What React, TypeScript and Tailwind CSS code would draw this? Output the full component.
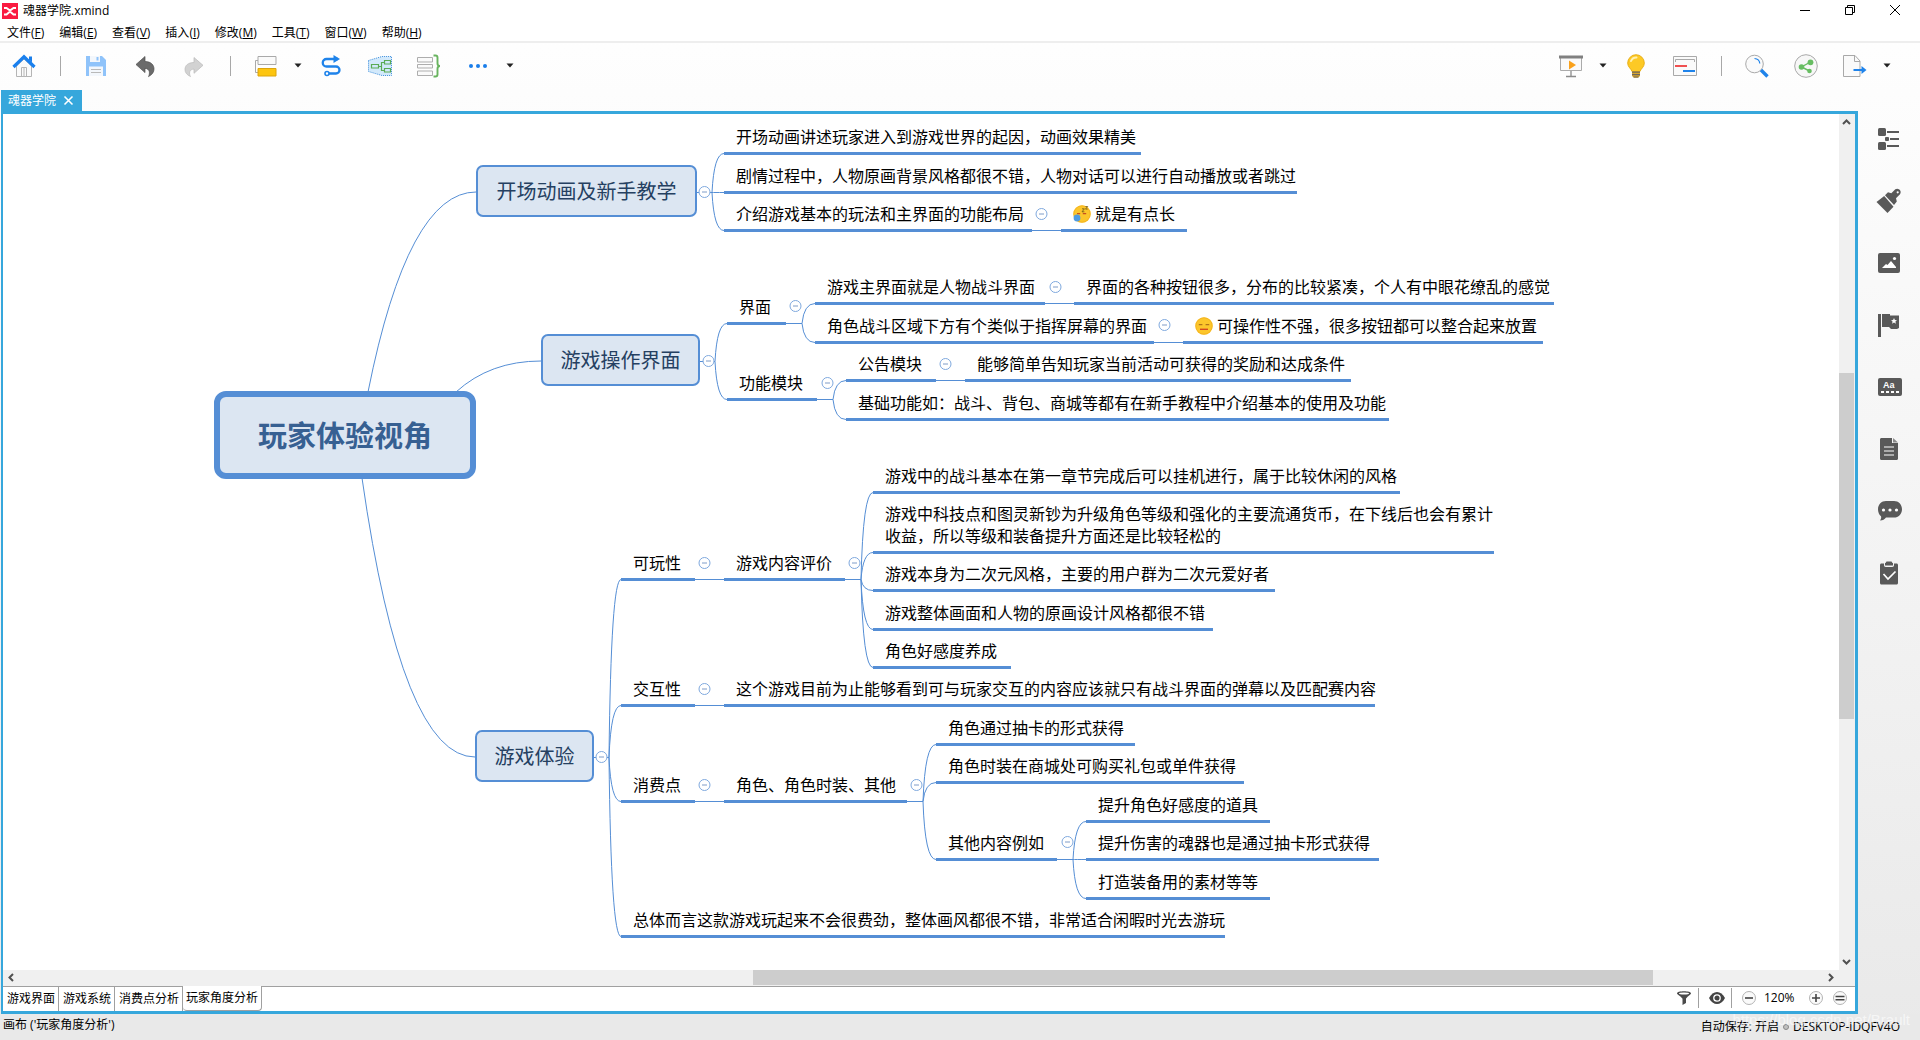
import React from 'react';

type Kind = 'root' | 'main' | 'leaf';

interface Topic {
  kind?: Kind;
  x: number;
  y: number;
  w: number;
  h?: number;
  text: string;
  emoji?: 'sleepy' | 'blank';
}

const MENUS = [
  { label: '文件', key: 'F' },
  { label: '编辑', key: 'E' },
  { label: '查看', key: 'V' },
  { label: '插入', key: 'I' },
  { label: '修改', key: 'M' },
  { label: '工具', key: 'T' },
  { label: '窗口', key: 'W' },
  { label: '帮助', key: 'H' },
];

const SHEETS = ['游戏界面', '游戏系统', '消费点分析', '玩家角度分析'];

// boxed topics: x / y is the top left corner
const BOXES: Topic[] = [
  { kind: 'root', x: 211, y: 277, w: 262, h: 88, text: '玩家体验视角' },
  { kind: 'main', x: 473, y: 51, w: 221, h: 52, text: '开场动画及新手教学' },
  { kind: 'main', x: 538, y: 220, w: 159, h: 52, text: '游戏操作界面' },
  { kind: 'main', x: 472, y: 616, w: 119, h: 52, text: '游戏体验' },
];

// underlined topics: y is the centre of the underline
const LEAVES: Topic[] = [
  { x: 721, y: 39, w: 417, text: '开场动画讲述玩家进入到游戏世界的起因，动画效果精美' },
  { x: 721, y: 78, w: 573, text: '剧情过程中，人物原画背景风格都很不错，人物对话可以进行自动播放或者跳过' },
  { x: 721, y: 116, w: 308, text: '介绍游戏基本的玩法和主界面的功能布局' },
  { x: 1058, y: 116, w: 126, text: '就是有点长', emoji: 'sleepy' },

  { x: 724, y: 209, w: 59, text: '界面' },
  { x: 812, y: 189, w: 230, text: '游戏主界面就是人物战斗界面' },
  { x: 1071, y: 189, w: 480, text: '界面的各种按钮很多，分布的比较紧凑，个人有中眼花缭乱的感觉' },
  { x: 812, y: 228, w: 339, text: '角色战斗区域下方有个类似于指挥屏幕的界面' },
  { x: 1180, y: 228, w: 360, text: '可操作性不强，很多按钮都可以整合起来放置', emoji: 'blank' },
  { x: 724, y: 285, w: 90, text: '功能模块' },
  { x: 843, y: 266, w: 90, text: '公告模块' },
  { x: 962, y: 266, w: 386, text: '能够简单告知玩家当前活动可获得的奖励和达成条件' },
  { x: 843, y: 305, w: 543, text: '基础功能如：战斗、背包、商城等都有在新手教程中介绍基本的使用及功能' },

  { x: 618, y: 465, w: 74, text: '可玩性' },
  { x: 721, y: 465, w: 121, text: '游戏内容评价' },
  { x: 870, y: 378, w: 527, text: '游戏中的战斗基本在第一章节完成后可以挂机进行，属于比较休闲的风格' },
  { x: 870, y: 438, w: 621, text: '游戏中科技点和图灵新钞为升级角色等级和强化的主要流通货币，在下线后也会有累计\n收益，所以等级和装备提升方面还是比较轻松的' },
  { x: 870, y: 476, w: 402, text: '游戏本身为二次元风格，主要的用户群为二次元爱好者' },
  { x: 870, y: 515, w: 340, text: '游戏整体画面和人物的原画设计风格都很不错' },
  { x: 870, y: 553, w: 138, text: '角色好感度养成' },

  { x: 618, y: 591, w: 74, text: '交互性' },
  { x: 721, y: 591, w: 651, text: '这个游戏目前为止能够看到可与玩家交互的内容应该就只有战斗界面的弹幕以及匹配赛内容' },

  { x: 618, y: 687, w: 74, text: '消费点' },
  { x: 721, y: 687, w: 183, text: '角色、角色时装、其他' },
  { x: 933, y: 630, w: 199, text: '角色通过抽卡的形式获得' },
  { x: 933, y: 668, w: 308, text: '角色时装在商城处可购买礼包或单件获得' },
  { x: 933, y: 745, w: 121, text: '其他内容例如' },
  { x: 1083, y: 707, w: 184, text: '提升角色好感度的道具' },
  { x: 1083, y: 745, w: 293, text: '提升伤害的魂器也是通过抽卡形式获得' },
  { x: 1083, y: 784, w: 184, text: '打造装备用的素材等等' },

  { x: 618, y: 822, w: 604, text: '总体而言这款游戏玩起来不会很费劲，整体画风都很不错，非常适合闲暇时光去游玩' },
];

// start of the stem, joint, x where the children begin, their underline heights
const BRACKETS = [
  { from: 694, joint: 709, y: 78, to: 721, ends: [39, 78, 116] },
  { from: 697, joint: 712, y: 247, to: 724, ends: [209, 285] },
  { from: 591, joint: 606, y: 643, to: 618, ends: [465, 591, 687, 822] },
  { from: 783, joint: 799, y: 209, to: 812, ends: [189, 228] },
  { from: 814, joint: 830, y: 285, to: 843, ends: [266, 305] },
  { from: 842, joint: 858, y: 465, to: 870, ends: [378, 438, 476, 515, 553] },
  { from: 904, joint: 920, y: 687, to: 933, ends: [630, 668, 745] },
  { from: 1054, joint: 1070, y: 745, to: 1083, ends: [707, 745, 784] },
];

const STEMS = [
  [1029, 1058, 116],
  [1042, 1071, 189],
  [1151, 1180, 228],
  [933, 962, 266],
  [692, 721, 465],
  [692, 721, 591],
  [692, 721, 687],
];

const TOGGLES = [
  [701, 78], [705, 247], [598, 643], [1038, 100], [792, 192], [1052, 173], [1161, 211],
  [824, 269], [942, 250], [701, 449], [851, 449], [701, 575], [701, 671], [913, 671], [1064, 728],
];

function Emoji({ type }: { type: 'sleepy' | 'blank' }) {
  return (
    <svg viewBox="0 0 18 18" className="mr-1 h-[18px] w-[18px] shrink-0">
      <circle cx="9" cy="9" r="8.7" fill="#fcc62b" />
      <circle cx="9" cy="9" r="8.2" fill="none" stroke="#f2b01e" strokeWidth="0.8" />
      {type === 'blank' ? (
        <>
          <path d="M3.8 7.6h3.6M10.6 7.6h3.6" stroke="#b0731a" strokeWidth="1.4" />
          <path d="M5 12.3h8" stroke="#d4491f" strokeWidth="1.4" />
        </>
      ) : (
        <>
          <path d="M4 8.6h3.2M9.8 8.6h3.4" stroke="#c8501e" strokeWidth="1.3" />
          <circle cx="4" cy="13" r="3.4" fill="#4e9be0" />
          <path d="M9 3.800h2.400l-2.400 3h2.400M12.500 1.500h2.200l-2.200 2.600h2.200" fill="none" stroke="#6b5417" strokeWidth="0.8" />
        </>
      )}
    </svg>
  );
}

function BoxTopic({ topic }: { topic: Topic }) {
  const root = topic.kind === 'root';
  return (
    <div
      className={
        root
          ? 'absolute flex items-center justify-center rounded-xl border-[6px] border-[#558ed5] bg-[#dce6f2] pt-0.5 text-[29px] font-bold text-[#376092]'
          : 'absolute flex items-center justify-center rounded-[7px] border-2 border-[#558ed5] bg-[#dce6f2] pt-0.5 text-xl text-[#254061]'
      }
      style={{ left: topic.x, top: topic.y, width: topic.w, height: topic.h }}
    >
      <span className="whitespace-nowrap">{topic.text}</span>
    </div>
  );
}

function LeafTopic({ topic }: { topic: Topic }) {
  const lines = topic.text.split('\n').length;
  return (
    <div
      className="absolute flex items-center border-b-[3px] border-[#558ed5] pb-1 pl-3 text-base leading-[22px] text-black"
      style={{ left: topic.x, top: topic.y - 5 - lines * 22, width: topic.w }}
    >
      {topic.emoji && <Emoji type={topic.emoji} />}
      <span className="whitespace-pre">{topic.text}</span>
    </div>
  );
}

function MindMap() {
  return (
    <div className="relative min-w-0 flex-1 overflow-hidden bg-white">
      <svg className="absolute top-0 left-0 h-full w-full" fill="none" stroke="#558ed5" strokeWidth="1">
        <path d="M365 278Q405 78 473 78" />
        <path d="M453 278Q487 247 538 247" />
        <path d="M359 364Q399 643 472 643" />
        {BRACKETS.map((b) => (
          <g key={`${b.from}-${b.y}`}>
            <path d={`M${b.from} ${b.y + 0.5}H${b.joint}`} />
            {b.ends.map((end) => (
              <path key={end} d={`M${b.joint} ${b.y + 0.5}Q${b.joint + 2} ${end + 0.5} ${b.to} ${end + 0.5}`} />
            ))}
          </g>
        ))}
        {STEMS.map(([x1, x2, y]) => (
          <path key={`${x1}-${y}`} d={`M${x1} ${y + 0.5}H${x2}`} />
        ))}
        {TOGGLES.map(([x, y]) => (
          <g key={`${x}-${y}`}>
            <circle cx={x + 0.5} cy={y} r="5.5" fill="#fff" stroke="#7fa9de" />
            <path d={`M${x - 2} ${y}h5`} stroke="#7f9cc8" />
          </g>
        ))}
      </svg>
      {BOXES.map((t) => (
        <BoxTopic key={t.text} topic={t} />
      ))}
      {LEAVES.map((t) => (
        <LeafTopic key={t.text} topic={t} />
      ))}
    </div>
  );
}

function ToolButton({ label, className = '', children }: { label: string; className?: string; children: React.ReactNode }) {
  return (
    <button type="button" aria-label={label} className={`h-6 w-6 shrink-0 ${className}`}>
      <svg viewBox="0 0 24 24" className="h-6 w-6" fill="none">
        {children}
      </svg>
    </button>
  );
}

function Caret({ label }: { label: string }) {
  return (
    <button type="button" aria-label={label} className="ml-4 w-2 shrink-0">
      <svg viewBox="0 0 8 5" className="h-[5px] w-2">
        <path d="M0.5 0.5h7L4 4.5z" fill="#222" />
      </svg>
    </button>
  );
}

function Divider() {
  return <div className="mr-[23px] ml-6 h-5 w-px bg-[#a8a8a8]" />;
}

function Toolbar() {
  return (
    <div className="flex h-[47px] shrink-0 items-center justify-between pr-[29px] pb-0.5 pl-3">
      <div className="flex items-center">
        <ToolButton label="主页">
          <path d="M4.5 12v10.5h15V12L12 5z" fill="#fbfbfb" stroke="#b5b5b5" />
          <path d="M9.5 22.5v-9h5v9M12 14v8" stroke="#b5b5b5" />
          <path d="M17 2.5h3v6l-3-3z" fill="#1a7eea" />
          <path d="M1.5 13 12 2.8 22.5 13" stroke="#1a80ee" strokeWidth="3.2" />
        </ToolButton>
        <Divider />
        <ToolButton label="保存">
          <path d="M2 2h16l4 4v16H2z" fill="#8fc3fa" />
          <path d="M6 2h10v6H6z" fill="#f3f7fc" />
          <path d="M12.5 3h2v3.5h-2z" fill="#8fc3fa" />
          <path d="M5 12.5h14V22H5z" fill="#f3f7fc" />
          <path d="M7 15.5h10M7 18.5h10" stroke="#b9b9b9" />
        </ToolButton>
        <ToolButton label="撤销" className="ml-[25px]">
          <path d="M12 2.5v5c6 0 9 3.5 9 7.5 0 3-1.7 5.6-5.500 7.600 1.500-2.800 1.700-8-3.500-8.200v4.200L3 10.500z" fill="#6b6b6b" stroke="#4f4f4f" strokeWidth="0.7" />
        </ToolButton>
        <ToolButton label="重做" className="ml-[25px]">
          <path d="M12 3.500v5c-6 0-9 3-9 7 0 3 1.700 5.200 5.500 7.100-1.500-2.800-1.700-7.300 3.500-7.500v4.200l9-8z" fill="#d2d2d2" stroke="#b9b9b9" strokeWidth="0.7" />
        </ToolButton>
        <Divider />
        <ToolButton label="主题">
          <path d="M4 2.500h18v8H4z" fill="#fafafa" stroke="#a9a9a9" />
          <path d="M4 6.500H1.500V18.500H4" stroke="#a9a9a9" />
          <path d="M4 14.500h18v7.500H4z" fill="#fdc50f" stroke="#dca40c" />
        </ToolButton>
        <Caret label="更多主题" />
        <ToolButton label="联系" className="ml-[17px]">
          <path d="M19 5H7.500a3.500 3.500 0 0 0 0 7.500H17a3.500 3.500 0 0 1 0 7H9" stroke="#1f83ea" strokeWidth="2.300" />
          <path d="M14.500 1v8L21 5z" fill="#1f83ea" />
          <circle cx="8" cy="19.500" r="2" fill="#fff" stroke="#1f83ea" strokeWidth="1.600" />
        </ToolButton>
        <ToolButton label="外框" className="ml-[25px]">
          <path d="M.5 6.500 14 2.500h9.500v19H14L.5 17.500z" fill="#d2e9fb" stroke="#3e8edc" strokeDasharray="1 1" />
          <path d="M3.500 10.500h7v3.500h-7zM16.500 6.500h6v3.500h-6zM16.500 14.500h6V18h-6zM10.500 12.500h3M16.500 8.500h-3v8h3" stroke="#5bab55" strokeWidth="1.200" />
        </ToolButton>
        <ToolButton label="概要" className="ml-[25px]">
          <path d="M.5 3.500h15V8H.5zM.5 10.500h15v3.500H.5zM.5 17h15v4.500H.5z" fill="#fafafa" stroke="#adadad" />
          <path d="M16.500 1.500h2c1.500 0 2 .7 2 2v5.700c0 1.800.8 2.800 2.500 2.800-1.700 0-2.500 1-2.500 2.800v5.700c0 1.300-.5 2-2 2h-2" stroke="#69b45f" strokeWidth="1.900" />
        </ToolButton>
        <ToolButton label="更多" className="ml-[25px]">
          <g fill="#1a7eea">
            <circle cx="5" cy="12" r="2" />
            <circle cx="12" cy="12" r="2" />
            <circle cx="19" cy="12" r="2" />
          </g>
        </ToolButton>
        <Caret label="更多工具" />
      </div>
      <div className="flex items-center">
        <ToolButton label="演示">
          <path d="M1.500 3.500h21v13h-21z" fill="#fafafa" stroke="#ababab" />
          <path d="M0 1.500h24v3H0z" fill="#808080" />
          <path d="M10 6.500v9l7-4.500z" fill="#f9a11b" />
          <path d="M12 17v5.500M7 22.500h10" stroke="#8b8b8b" strokeWidth="1.300" />
        </ToolButton>
        <Caret label="演示选项" />
        <ToolButton label="头脑风暴" className="ml-[17px]">
          <path d="M12 .7a8.300 8.300 0 0 0-8.300 8.300c0 4 3.300 5.500 4.300 8.500h8c1-3 4.300-4.500 4.300-8.500A8.300 8.300 0 0 0 12 .7z" fill="#fdc925" stroke="#e5aa10" strokeWidth="0.900" />
          <path d="M7 7c1-2.600 3-3.700 5.500-3.600" stroke="#fff0b0" strokeWidth="2" strokeLinecap="round" />
          <path d="M8 17.500h8V22l-2 1.800h-4L8 22z" fill="#d8a52d" />
          <path d="M8 18.200h8M8 20.600h8M9.500 23h5" stroke="#6d675c" strokeWidth="1.200" />
        </ToolButton>
        <ToolButton label="甘特图" className="ml-[25px]">
          <path d="M.5 2.500h23v19H.5z" fill="#fafafa" stroke="#a9a9a9" />
          <path d="M2.500 8V5.500h19V8" stroke="#a9a9a9" />
          <path d="M2 12h12" stroke="#f05050" strokeWidth="2" />
          <path d="M10 17h12" stroke="#1f83ea" strokeWidth="2" />
        </ToolButton>
        <Divider />
        <ToolButton label="搜索">
          <circle cx="9.500" cy="10" r="8.800" fill="#fafafa" stroke="#a9a9a9" />
          <path d="M9.500 4.500c3.300.2 5 2.200 5.300 5" stroke="#1f83ea" strokeWidth="1.200" />
          <path d="m16 16 6.500 6.500" stroke="#1f83ea" strokeWidth="3.400" />
        </ToolButton>
        <ToolButton label="分享" className="ml-[25px]">
          <circle cx="12" cy="12" r="11.300" fill="#f7f7f7" stroke="#a9a9a9" />
          <path d="M16.500 8 7.500 13l8 4" stroke="#67bd62" strokeWidth="1.400" />
          <g fill="#67bd62">
            <circle cx="16.500" cy="8.300" r="2.900" />
            <circle cx="7.500" cy="13" r="2.800" />
            <circle cx="15.500" cy="17" r="2.300" />
          </g>
        </ToolButton>
        <ToolButton label="导出" className="ml-[25px]">
          <path d="M.5 1.500H12l5 5.500v15.500H.5z" fill="#fafafa" stroke="#a9a9a9" />
          <path d="M11.500 1.500V7.500H17" stroke="#a9a9a9" />
          <path d="M10.500 16H20" stroke="#1f83ea" strokeWidth="2" />
          <path d="M18.500 12v8l5-4z" fill="#1f83ea" />
        </ToolButton>
        <Caret label="导出选项" />
      </div>
    </div>
  );
}

function SideButton({ label, children }: { label: string; children: React.ReactNode }) {
  return (
    <button type="button" aria-label={label} className="flex h-[62px] items-center justify-center text-[#595959]">
      <svg viewBox="0 0 24 24" className="h-6 w-6 overflow-visible" fill="currentColor">
        {children}
      </svg>
    </button>
  );
}

function Sidebar() {
  return (
    <aside className="-mt-[3px] flex w-[62px] shrink-0 flex-col">
      <SideButton label="大纲">
        <rect x="1" y="1" width="8" height="8" rx="1.500" />
        <rect x="1" y="15" width="8" height="8" rx="1.500" />
        <rect x="8" y="10" width="4" height="4" rx="1" />
        <path d="M10 4h12v2H10zM13 11h9v2h-9zM10 18h12v2H10z" />
      </SideButton>
      <SideButton label="格式">
        <path d="m-.5 13 7.700-6 9.300 10.700L10.500 24z" />
        <path d="m8 6.300 3-3 3.300 1 4-4c3-2 7 1.500 4.700 5l-4 4 .8 3.300-2.800 3.400z" />
        <circle cx="20.700" cy="3.300" r="1.100" fill="#fafafa" />
      </SideButton>
      <SideButton label="图片">
        <rect x="1" y="2" width="22" height="20" rx="2" />
        <path d="m5 17 4-4 1.500 1L14 10l5 6v1z" fill="#fff" />
        <circle cx="17.500" cy="7.500" r="1.600" fill="#fff" />
      </SideButton>
      <SideButton label="图标">
        <path d="M1 1h3v23H1zM5 1h8v1.500h9V15l-2 1h-6l-2-2H5z" />
        <path d="m17 5 .9 2 2.100.2-1.600 1.400.5 2.100-1.900-1.100-1.900 1.100.5-2.100L14 7.200l2.100-.2z" fill="#fff" />
      </SideButton>
      <SideButton label="标签">
        <rect x="1" y="3" width="24" height="18" rx="2" />
        <text x="6" y="13" fontSize="9" fontWeight="700" fill="#fff" className="font-['Liberation_Sans',sans-serif]">Aa</text>
        <path d="M4 17h3M9 17h3M14 17h3M19 17h3" stroke="#fff" strokeWidth="2" />
      </SideButton>
      <SideButton label="备注">
        <path d="M4.500 1H15v5h6v15.500c0 .9-.6 1.500-1.500 1.500h-15c-.9 0-1.500-.6-1.500-1.500v-19C3 1.600 3.600 1 4.500 1z" />
        <path d="M16 1v4.500h5z" fill="#8b8b8b" />
        <path d="M7 10h10M7 14h10M7 18h10" stroke="#fff" strokeWidth="1.200" />
      </SideButton>
      <SideButton label="评论">
        <path d="M9 2h8c4.500 0 8 3.500 8 8.200s-3.500 8.300-8 8.300H9c-1.500 2-3 2.800-6 3 1-1 1.500-2.500 1-4.200C2 15.800 1 13 1 10.200 1 5.500 4.500 2 9 2z" />
        <g fill="#fff">
          <circle cx="6.500" cy="11" r="1.600" />
          <circle cx="13" cy="11" r="1.600" />
          <circle cx="19.500" cy="11" r="1.600" />
        </g>
      </SideButton>
      <SideButton label="任务信息">
        <path d="M4.500 2.500H7V4c0 1.200.6 2 1.800 2h6.400C16.400 6 17 5.200 17 4V2.500h2.500c.9 0 1.500.6 1.500 1.500v18c0 .9-.6 1.500-1.500 1.500h-15C3.600 23.500 3 22.900 3 22V4c0-.9.6-1.500 1.500-1.500z" />
        <path d="M9.500.5h5l1 1.500h.5v2.500H8V2h.5z" />
        <path d="m6.500 13 4.500 5 7.500-7.500" fill="none" stroke="#fff" strokeWidth="1.700" />
      </SideButton>
    </aside>
  );
}

function ScrollArrow({ label, d }: { label: string; d: string }) {
  return (
    <button type="button" aria-label={label} className="h-4 w-4 shrink-0">
      <svg viewBox="0 0 16 16" className="h-4 w-4" fill="none" stroke="#505050" strokeWidth="2">
        <path d={d} />
      </svg>
    </button>
  );
}

function SheetBar() {
  return (
    <div className="flex h-[25px] shrink-0 bg-white text-xs">
      {SHEETS.map((name, i) =>
        i === SHEETS.length - 1 ? (
          <button key={name} type="button" className="rounded-b-sm border-r border-b border-[#a0a0a0] px-[3px]">
            {name}
          </button>
        ) : (
          <button key={name} type="button" className="border-t border-r border-[#a0a0a0] pr-[3px] pl-1">
            {name}
          </button>
        ),
      )}
      <div className="flex flex-1 items-center justify-end border-t border-[#a0a0a0] pr-2 pb-0.5">
        <button type="button" aria-label="筛选">
          <svg viewBox="0 0 14 14" className="h-3.5 w-3.5">
            <path d="M0 2.500C0 1 3 .3 7 .3s7 .7 7 2.200c0 .9-5 4-5 5.500V12l-3.500 2V8C5.500 6.500 0 3.400 0 2.500z" fill="#4a4a4a" />
            <ellipse cx="7" cy="2.400" rx="5" ry="1" fill="#fff" />
          </svg>
        </button>
        <div className="mx-[7px] h-5 w-px bg-[#a0a0a0]" />
        <button type="button" aria-label="显示" className="mx-[3px]">
          <svg viewBox="0 0 16 12" className="h-3 w-4">
            <path d="M0 6c2-4 5-6 8-6s6 2 8 6c-2 4-5 6-8 6S2 10 0 6z" fill="#444" />
            <circle cx="8" cy="6" r="3.200" fill="none" stroke="#fff" strokeWidth="1.300" />
          </svg>
        </button>
        <div className="ml-[3px] h-5 w-px bg-[#a0a0a0]" />
        <button type="button" aria-label="缩小" className="ml-2.5">
          <svg viewBox="0 0 14 14" className="h-3.5 w-3.5">
            <circle cx="7" cy="7" r="6.500" fill="#fafafa" stroke="#b3b3b3" />
            <path d="M3 7h8" stroke="#444" strokeWidth="1.600" />
          </svg>
        </button>
        <span className="ml-2 w-[45px]">120%</span>
        <button type="button" aria-label="放大">
          <svg viewBox="0 0 14 14" className="h-3.5 w-3.5">
            <circle cx="7" cy="7" r="6.500" fill="#fafafa" stroke="#b3b3b3" />
            <path d="M3 7h8M7 3v8" stroke="#444" strokeWidth="1.600" />
          </svg>
        </button>
        <button type="button" aria-label="实际大小" className="ml-2.5">
          <svg viewBox="0 0 14 14" className="h-3.5 w-3.5">
            <circle cx="7" cy="7" r="6.500" fill="#fafafa" stroke="#b3b3b3" />
            <path d="M2.500 5.500h9M2.500 8.700h9" stroke="#444" strokeWidth="1.600" />
          </svg>
        </button>
      </div>
    </div>
  );
}

export default function App() {
  return (
    <div className="flex h-screen flex-col overflow-hidden bg-linear-to-b from-white to-[#e9e9e9] font-['Open_Sans','Noto_Sans_CJK_SC',sans-serif] text-xs text-black">
      <div className="shrink-0 border-b-2 border-[#eeeeee] bg-white">
        {/* Title bar */}
        <div className="flex h-6 items-center justify-between">
          <div className="flex items-center gap-[5px] pb-0.5 pl-0.5">
            <svg viewBox="0 0 16 16" className="h-4 w-4">
              <path d="M0 0h16v16H0z" fill="#fa1b41" />
              <path d="M2 5h2.500L8 7.500 11.500 5H14M2 11.500h2.500L8 8.500l3.500 3H14" fill="none" stroke="#fff" strokeWidth="2" />
            </svg>
            <span>魂器学院.xmind</span>
          </div>
          <div className="mr-5 flex items-center gap-[35px] pb-1">
            <button type="button" aria-label="最小化">
              <svg viewBox="0 0 10 10" className="h-2.5 w-2.5"><path d="M0 5.500h10" stroke="#000" /></svg>
            </button>
            <button type="button" aria-label="还原">
              <svg viewBox="0 0 10 10" className="h-2.5 w-2.5" fill="none" stroke="#000">
                <path d="M.5 2.500h7v7h-7zM2.500 2.500v-2h7v7h-2" />
              </svg>
            </button>
            <button type="button" aria-label="关闭">
              <svg viewBox="0 0 10 10" className="h-2.5 w-2.5" stroke="#000"><path d="m0 0 10 10M10 0 0 10" /></svg>
            </button>
          </div>
        </div>
        {/* Menu bar */}
        <nav className="flex h-[17px] items-center gap-[15px] pl-[7px]">
          {MENUS.map((m) => (
            <button key={m.key} type="button" className="whitespace-nowrap">
              {m.label}(<span className="underline">{m.key}</span>)
            </button>
          ))}
        </nav>
      </div>

      <Toolbar />

      <div className="flex h-[21px] shrink-0 pl-px">
        <div className="flex items-center gap-[7px] bg-[#36a7dc] pr-2 pl-[7px] text-white">
          <span className="pt-px">魂器学院</span>
          <button type="button" aria-label="关闭标签页">
            <svg viewBox="0 0 11 11" className="h-[11px] w-[11px]" stroke="#fff" strokeWidth="1.600">
              <path d="m1.500 1.500 8 8M9.500 1.500l-8 8" />
            </svg>
          </button>
        </div>
      </div>

      <div className="flex min-h-0 flex-1 pl-px">
        <main className="flex min-w-0 flex-1 flex-col border-3 border-l-2 border-[#36a7dc]">
          <div className="flex min-h-0 flex-1">
            <MindMap />
            <div className="flex w-4 shrink-0 flex-col bg-[#f0f0f0]">
              <ScrollArrow label="向上滚动" d="m4 10 3.500-3.500L11 10" />
              <div className="flex-1">
                <div className="h-[29.5%]" />
                <div className="h-[42%] w-[15px] bg-[#cdcdcd]" />
              </div>
              <ScrollArrow label="向下滚动" d="M4 6l3.500 3.500L11 6" />
            </div>
          </div>
          <div className="flex h-4 shrink-0 bg-[#f0f0f0] pr-4">
            <ScrollArrow label="向左滚动" d="M10 4 6.500 7.500 10 11" />
            <div className="flex flex-1">
              <div className="ml-[40.7%] h-[15px] w-[49.9%] bg-[#cdcdcd]" />
            </div>
            <ScrollArrow label="向右滚动" d="m6 4 3.500 3.500L6 11" />
          </div>
          <SheetBar />
        </main>
        <Sidebar />
      </div>

      <footer className="relative flex h-[26px] shrink-0 items-center justify-between bg-[#e9e9e9] pr-5 pl-[3px]">
        <span className="pb-1">画布 ('玩家角度分析')</span>
        <div className="flex items-center">
          <span>自动保存: 开启</span>
          <span className="mx-1 h-1.5 w-1.5 rounded-full border border-[#888] bg-[#c0c0c0]" />
          <span>DESKTOP-iDQFV4O</span>
        </div>
        <span className="absolute -top-1 right-2.5 font-['Liberation_Sans',sans-serif] text-[15px] text-white/60">
          https://blog.csdn.net/Brault
        </span>
      </footer>
    </div>
  );
}
